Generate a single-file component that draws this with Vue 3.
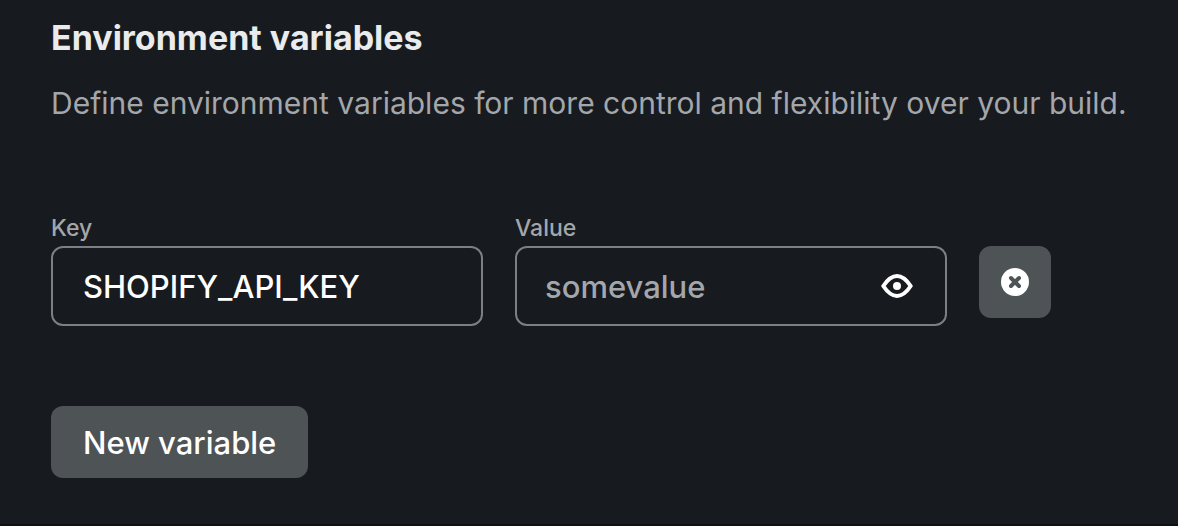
<script setup>
import { ref } from 'vue'

const variables = ref([{ id: 1, key: 'SHOPIFY_API_KEY', value: 'somevalue' }])
const visible = ref(true)

function addVariable() {
  variables.value.push({ id: Date.now(), key: '', value: '' })
}

function removeVariable(id) {
  variables.value = variables.value.filter((item) => item.id !== id)
}
</script>

<template>
  <main class="panel">
    <h2 class="title">Environment variables</h2>
    <p class="intro">Define environment variables for more control and flexibility over your build.</p>

    <div class="rows">
      <div v-for="item in variables" :key="item.id" class="row">
        <div class="field">
          <label class="label" :for="`key-${item.id}`">Key</label>
          <div class="box">
            <input :id="`key-${item.id}`" v-model="item.key" class="input" type="text" spellcheck="false" />
          </div>
        </div>
        <div class="field">
          <label class="label" :for="`value-${item.id}`">Value</label>
          <div class="box secret">
            <input
              :id="`value-${item.id}`"
              v-model="item.value"
              class="input muted"
              :type="visible ? 'text' : 'password'"
              spellcheck="false"
            />
            <button class="reveal" type="button" aria-label="Toggle value visibility" @click="visible = !visible">
              <svg width="32" height="24" viewBox="0 0 32 24" aria-hidden="true">
                <path
                  d="M2.300 12C6.300 6 10.600 2 16 2s9.700 4 13.700 10C25.700 18 21.400 22 16 22S6.300 18 2.300 12Z"
                  fill="none"
                  stroke="currentColor"
                  stroke-width="4"
                  stroke-linejoin="round"
                />
                <circle cx="16" cy="12" r="4" fill="currentColor" />
              </svg>
            </button>
          </div>
        </div>
        <button class="button remove" type="button" aria-label="Remove variable" @click="removeVariable(item.id)">
          <svg width="28" height="28" viewBox="0 0 28 28" aria-hidden="true">
            <circle cx="14" cy="14" r="14" fill="currentColor" />
            <path d="M10 10l8 8M18 10l-8 8" stroke="#4e5356" stroke-width="4" stroke-linecap="round" />
          </svg>
        </button>
      </div>
    </div>

    <button class="button add" type="button" @click="addVariable">New variable</button>
  </main>
</template>

<style>
body {
  background: #171a1e;
}
</style>

<style scoped>
.panel {
  box-sizing: border-box;
  min-height: 100vh;
  padding: 16px 32px 44px 51px;
  border-bottom: 2px solid #0e1013;
  background: #171a1e;
  color: #fff;
  font-family: Inter, "Liberation Sans", sans-serif;
}

.title {
  margin: 0;
  color: #e9ebed;
  font-size: 34px;
  line-height: 44px;
  font-weight: 700;
}

.intro {
  margin: 20px 0 0;
  color: #a3a7ab;
  font-size: 30px;
  line-height: 46px;
}

.rows {
  display: flex;
  flex-direction: column;
  gap: 32px;
  margin: 88px 0 80px;
}

.row {
  display: flex;
  align-items: flex-end;
  gap: 32px;
}

.field {
  flex: 0 1 432px;
  min-width: 0;
}

.label {
  display: block;
  margin-bottom: 4px;
  color: #a3a7ab;
  font-size: 23px;
  line-height: 28px;
  font-weight: 500;
}

.box {
  display: flex;
  align-items: center;
  box-sizing: border-box;
  height: 80px;
  padding: 0 30px;
  border: 2px solid #7c8084;
  border-radius: 12px;
}

.secret {
  padding-left: 28px;
}

.input {
  flex: 1;
  min-width: 0;
  padding: 2px 0 0;
  border: 0;
  outline: 0;
  background: transparent;
  color: #fff;
  font: inherit;
  font-size: 31px;
  line-height: 48px;
  font-weight: 500;
}

.muted {
  color: #a3a7ab;
}

.reveal {
  display: flex;
  padding: 2px;
  border: 0;
  background: transparent;
  color: #fff;
}

.button {
  height: 72px;
  border: 0;
  border-radius: 12px;
  background: #4e5356;
  color: #fff;
  font: inherit;
  font-size: 31px;
  line-height: 48px;
  font-weight: 500;
}

.remove {
  display: flex;
  flex: none;
  align-items: center;
  justify-content: center;
  width: 72px;
  margin-bottom: 8px;
  padding: 0;
}

.add {
  padding: 2px 32px 0;
}
</style>
